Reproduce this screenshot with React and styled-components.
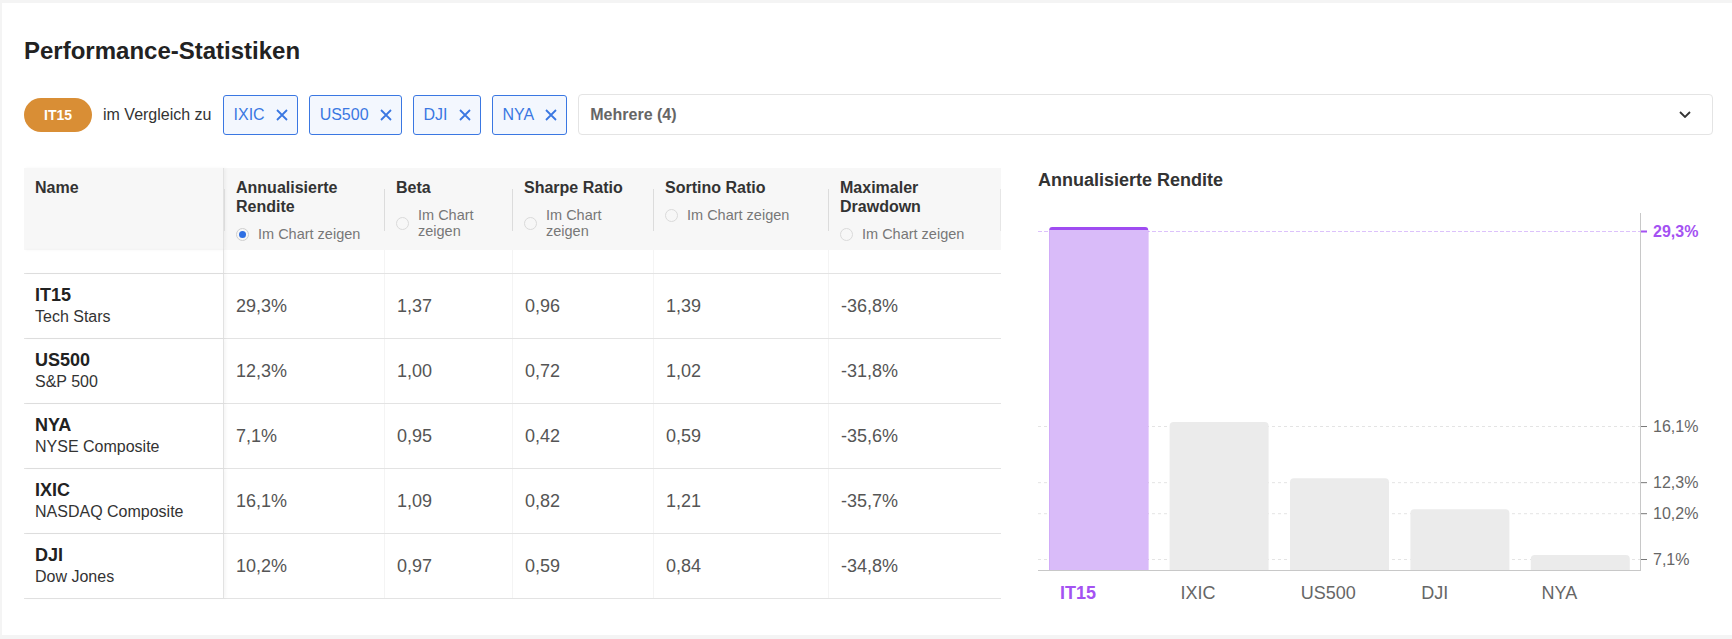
import React from 'react'
import styled, { createGlobalStyle } from 'styled-components'

const GlobalStyle = createGlobalStyle`
  body {
    margin: 0;
    background: #f4f4f4;
    font-family: "Liberation Sans", Arial, sans-serif;
    color: #333;
  }
`

const purple = '#a452f2'
const blue = '#3a77e2'

const Card = styled.div`
  box-sizing: border-box;
  height: 632px;
  margin: 3px 0 4px 2px;
  padding: 34px 19px 0 22px;
  background: #fff;
`

const Title = styled.h1`
  margin: 0;
  font-size: 24px;
  line-height: 28px;
  font-weight: 700;
  color: #222;
`

const FilterRow = styled.div`
  display: flex;
  align-items: center;
  gap: 11px;
  margin-top: 29px;
  height: 41px;
`

const BasePill = styled.div`
  height: 34px;
  padding: 0 20px;
  border-radius: 17px;
  background: #d98e35;
  color: #fff;
  font-size: 14px;
  font-weight: 700;
  display: flex;
  align-items: center;
`

const CompareLabel = styled.span`
  font-size: 16px;
  color: #333;
`

const Chip = styled.div`
  box-sizing: border-box;
  height: 40px;
  padding: 0 9px 0 10px;
  display: flex;
  align-items: center;
  gap: 11px;
  border: 1px solid ${blue};
  border-radius: 3px;
  background: #f3f7fe;
  color: ${blue};
  font-size: 16px;
`

const Select = styled.div`
  box-sizing: border-box;
  flex: 1;
  height: 41px;
  padding: 0 21px 0 11px;
  display: flex;
  align-items: center;
  justify-content: space-between;
  border: 1px solid #e4e4e4;
  border-radius: 4px;
`

const SelectValue = styled.span`
  font-size: 16px;
  font-weight: 700;
  color: #666;
`

const Body = styled.div`
  display: flex;
  align-items: flex-start;
  gap: 37px;
  margin-top: 33px;
`

const Table = styled.div`
  width: 977px;
  flex-shrink: 0;
`

const cols = '200px 160px 128px 141px 175px 173px'

const HeadRow = styled.div`
  display: grid;
  grid-template-columns: ${cols};
  height: 82px;
  background: #f7f7f7;
`

const HeadCell = styled.div`
  position: relative;
  padding: 10px 12px 8px;
  font-size: 16px;
  line-height: 19px;
  font-weight: 700;
  color: #333;

  &::before {
    content: '';
    position: absolute;
    left: 0;
    top: 21px;
    height: 42px;
    width: 1px;
    background: #dcdcdc;
  }

  &:last-child::after {
    content: '';
    position: absolute;
    right: 0;
    top: 21px;
    height: 42px;
    width: 1px;
    background: #e6e6e6;
  }
`

const NameHead = styled.div`
  padding: 10px 11px 8px;
  font-size: 16px;
  line-height: 19px;
  font-weight: 700;
  color: #333;
  border-right: 1px solid #e2e2e2;
  box-shadow: 2px 0 3px rgba(0, 0, 0, 0.04);
`

const RadioRow = styled.label`
  display: flex;
  align-items: center;
  gap: 9px;
  margin-top: 10px;
  font-size: 14.5px;
  line-height: 16px;
  font-weight: 400;
  color: #777;
`

const Radio = styled.span`
  box-sizing: border-box;
  flex-shrink: 0;
  width: 13px;
  height: 13px;
  border-radius: 50%;
  border: 1px solid ${p => (p.$checked ? '#cfcfcf' : '#dadada')};
  display: flex;
  align-items: center;
  justify-content: center;

  &::after {
    content: '';
    display: ${p => (p.$checked ? 'block' : 'none')};
    width: 7px;
    height: 7px;
    border-radius: 50%;
    background: #2e6fe3;
  }
`

const Row = styled.div`
  box-sizing: border-box;
  display: grid;
  grid-template-columns: ${cols};
  height: ${p => (p.$spacer ? '24px' : '65px')};
  border-bottom: 1px solid #e3e3e3;
`

const NameCell = styled.div`
  padding: 0 11px;
  display: flex;
  flex-direction: column;
  justify-content: center;
  border-right: 1px solid #e2e2e2;
  box-shadow: 2px 0 3px rgba(0, 0, 0, 0.04);
`

const Symbol = styled.div`
  font-size: 18px;
  line-height: 22px;
  font-weight: 700;
  color: #222;
`

const FullName = styled.div`
  font-size: 16px;
  line-height: 22px;
  color: #333;
`

const ValueCell = styled.div`
  padding: 0 12px;
  display: flex;
  align-items: center;
  font-size: 18px;
  color: #555;
  border-left: ${p => (p.$edge ? 'none' : '1px solid #f4f4f4')};
`

const ChartPanel = styled.div`
  flex: 1;
`

const ChartTitle = styled.h2`
  margin: 0;
  font-size: 18px;
  line-height: 24px;
  font-weight: 700;
  color: #333;
`

const ChartSvg = styled.svg`
  display: block;
  margin-top: 8px;
  font-family: "Liberation Sans", Arial, sans-serif;
`

const XIcon = () => (
  <svg width='12' height='12' viewBox='0 0 12 12'>
    <path d='M1 1 L11 11 M11 1 L1 11' stroke={blue} strokeWidth='1.8' fill='none' />
  </svg>
)

const Chevron = () => (
  <svg width='12' height='7' viewBox='0 0 12 7'>
    <path d='M1 1 L6 6 L11 1' stroke='#333' strokeWidth='1.8' fill='none' />
  </svg>
)

const chips = ['IXIC', 'US500', 'DJI', 'NYA']

const columns = [
  { title: 'Annualisierte Rendite', checked: true },
  { title: 'Beta' },
  { title: 'Sharpe Ratio' },
  { title: 'Sortino Ratio' },
  { title: 'Maximaler Drawdown' }
]

const rows = [
  { sym: 'IT15', name: 'Tech Stars', vals: ['29,3%', '1,37', '0,96', '1,39', '-36,8%'] },
  { sym: 'US500', name: 'S&P 500', vals: ['12,3%', '1,00', '0,72', '1,02', '-31,8%'] },
  { sym: 'NYA', name: 'NYSE Composite', vals: ['7,1%', '0,95', '0,42', '0,59', '-35,6%'] },
  { sym: 'IXIC', name: 'NASDAQ Composite', vals: ['16,1%', '1,09', '0,82', '1,21', '-35,7%'] },
  { sym: 'DJI', name: 'Dow Jones', vals: ['10,2%', '0,97', '0,59', '0,84', '-34,8%'] }
]

const bars = [
  { label: 'IT15', value: 29.3, text: '29,3%', active: true },
  { label: 'IXIC', value: 16.1, text: '16,1%' },
  { label: 'US500', value: 12.3, text: '12,3%' },
  { label: 'DJI', value: 10.2, text: '10,2%' },
  { label: 'NYA', value: 7.1, text: '7,1%' }
]

const AXIS_X = 602
const BASE_Y = 370
const SLOT = 120.4
const yOf = v => 359 - (v - 7.1) * 14.775

const barPath = (x, top, w, r) =>
  `M${x} ${BASE_Y} V${top + r} Q${x} ${top} ${x + r} ${top} H${x + w - r} Q${x + w} ${top} ${x + w} ${top + r} V${BASE_Y} Z`

const Chart = () => (
  <ChartSvg width='675' height='420'>
    {bars.map(b => (
      <line key={'g' + b.label} x1='0' x2={AXIS_X} y1={yOf(b.value) + 0.5} y2={yOf(b.value) + 0.5}
        stroke={b.active ? '#dcc2fb' : '#e4e4e4'} strokeDasharray={b.active ? '4 2' : '3 3'} />
    ))}
    {bars.map((b, i) => {
      const x = 0.5 + i * SLOT + 10.7
      const top = yOf(b.value) - 4
      return b.active ? (
        <g key={b.label}>
          <path d={barPath(x, top, 99, 3)} fill='#9f4cf1' />
          <rect x={x} y={top + 3} width='99' height={BASE_Y - top - 3} fill='#d9bbf9' />
        </g>
      ) : (
        <path key={b.label} d={barPath(x, top, 99, 4)} fill='#ebebeb' />
      )
    })}
    <line x1={AXIS_X + 0.5} x2={AXIS_X + 0.5} y1='13' y2={BASE_Y + 1} stroke='#c8c8c8' />
    <line x1='0' x2={AXIS_X} y1={BASE_Y + 0.5} y2={BASE_Y + 0.5} stroke='#c8c8c8' />
    {bars.map(b => (
      <g key={'t' + b.label}>
        <line x1={AXIS_X + 1} x2={AXIS_X + 7} y1={yOf(b.value) + 0.5} y2={yOf(b.value) + 0.5}
          stroke={b.active ? purple : '#777'} strokeWidth={b.active ? 2 : 1} />
        <text x={AXIS_X + 13} y={yOf(b.value) + 6} fontSize='16'
          fontWeight={b.active ? 700 : 400} fill={b.active ? purple : '#666'}>{b.text}</text>
      </g>
    ))}
    {bars.map((b, i) => (
      <text key={'x' + b.label} x={0.5 + i * SLOT + 21.5} y='399' fontSize='18'
        fontWeight={b.active ? 700 : 400} fill={b.active ? purple : '#666'}>{b.label}</text>
    ))}
  </ChartSvg>
)

export default function App () {
  return (
    <>
      <GlobalStyle />
      <Card>
        <Title>Performance-Statistiken</Title>
        <FilterRow>
          <BasePill>IT15</BasePill>
          <CompareLabel>im Vergleich zu</CompareLabel>
          {chips.map(c => (
            <Chip key={c}>{c}<XIcon /></Chip>
          ))}
          <Select>
            <SelectValue>Mehrere (4)</SelectValue>
            <Chevron />
          </Select>
        </FilterRow>
        <Body>
          <Table>
            <HeadRow>
              <NameHead>Name</NameHead>
              {columns.map(c => (
                <HeadCell key={c.title}>
                  {c.title}
                  <RadioRow>
                    <Radio $checked={c.checked} />
                    <span>Im Chart zeigen</span>
                  </RadioRow>
                </HeadCell>
              ))}
            </HeadRow>
            <Row $spacer>
              <NameCell />
              {columns.map((c, i) => <ValueCell key={c.title} $edge={i === 0} />)}
            </Row>
            {rows.map(r => (
              <Row key={r.sym}>
                <NameCell>
                  <Symbol>{r.sym}</Symbol>
                  <FullName>{r.name}</FullName>
                </NameCell>
                {r.vals.map((v, i) => (
                  <ValueCell key={i} $edge={i === 0}>{v}</ValueCell>
                ))}
              </Row>
            ))}
          </Table>
          <ChartPanel>
            <ChartTitle>Annualisierte Rendite</ChartTitle>
            <Chart />
          </ChartPanel>
        </Body>
      </Card>
    </>
  )
}
